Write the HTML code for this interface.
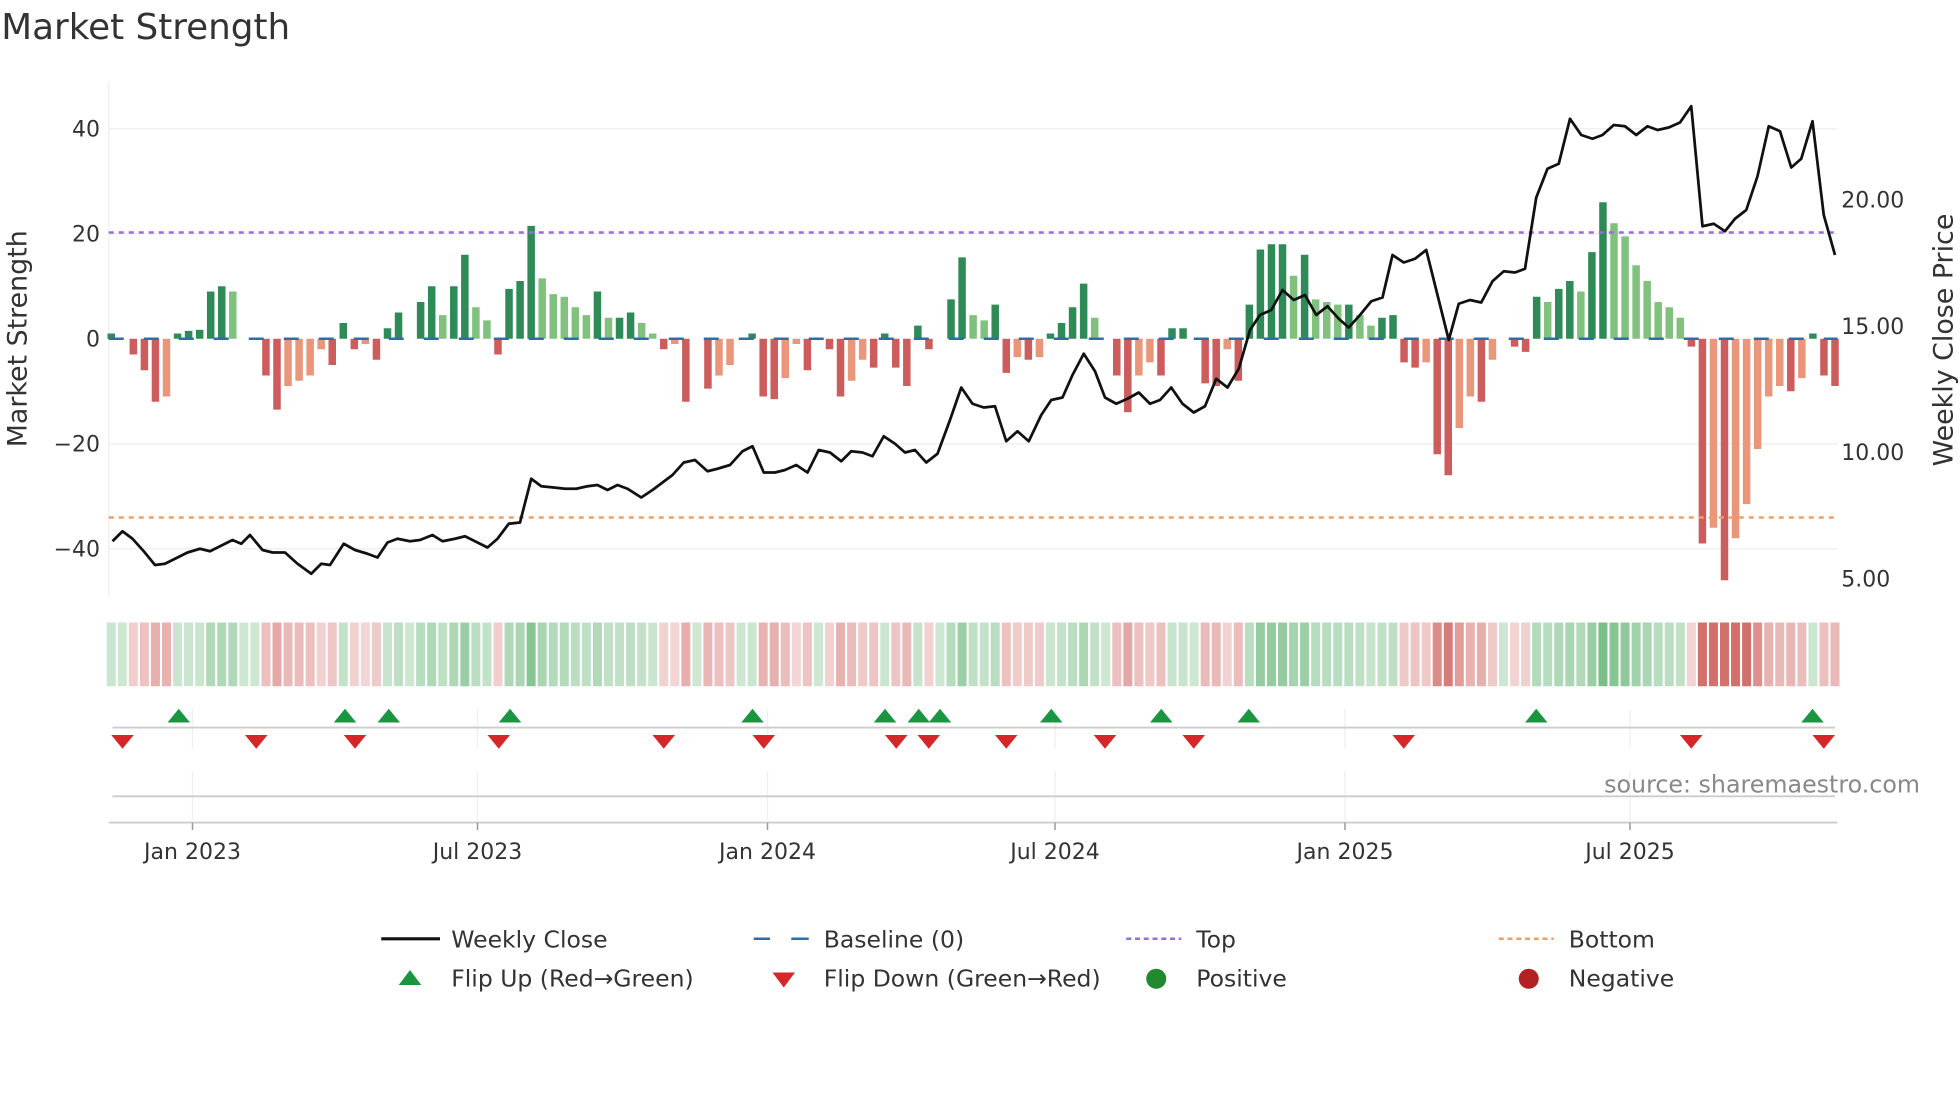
<!DOCTYPE html>
<html><head><meta charset="utf-8"><style>
html,body{margin:0;padding:0;background:#fff;}
svg{display:block;font-family:"DejaVu Sans","Liberation Sans",sans-serif;}
</style></head><body>
<svg id="s" width="1960" height="1102" viewBox="0 0 1568 881.6" xmlns="http://www.w3.org/2000/svg">
<rect width="1568" height="882" fill="#fff"/>
<text x="1" y="31" font-size="28.6" fill="#333">Market Strength</text>
<g stroke="#eef0f4" stroke-width="1.2">
<line x1="87" x2="1470" y1="103" y2="103"/>
<line x1="87" x2="1470" y1="187" y2="187"/>
<line x1="87" x2="1470" y1="355" y2="355"/>
<line x1="87" x2="1470" y1="439" y2="439"/>
<line x1="87" x2="87" y1="65" y2="478"/>
</g>
<g font-size="17.6" fill="#333" text-anchor="end">
<text x="80" y="109">40</text><text x="80" y="193">20</text><text x="80" y="277">0</text>
<text x="80" y="361">−20</text><text x="80" y="445">−40</text>
</g>
<g font-size="17.6" fill="#333">
<text x="1473" y="166">20.00</text><text x="1473" y="267">15.00</text>
<text x="1473" y="368">10.00</text><text x="1473" y="469">5.00</text>
</g>
<text transform="translate(21,271) rotate(-90)" font-size="21.5" fill="#333" text-anchor="middle">Market Strength</text>
<text transform="translate(1562,272) rotate(-90)" font-size="21.5" fill="#333" text-anchor="middle">Weekly Close Price</text>
<g id="bars"></g>
<line x1="87" x2="1470" y1="271" y2="271" stroke="#2b6ea8" stroke-width="2" stroke-dasharray="12 16"/>
<line x1="87" x2="1470" y1="186" y2="186" stroke="#9b6be0" stroke-width="2" stroke-dasharray="4 4"/>
<line x1="87" x2="1470" y1="414" y2="414" stroke="#f0a060" stroke-width="2" stroke-dasharray="4 4"/>
<polyline id="price" fill="none" stroke="#111" stroke-width="2.2" stroke-linejoin="round"/>
<g id="strip"></g>
<g stroke="#eef0f4" stroke-width="1.2" id="vg"></g>
<line x1="90" x2="1468" y1="582" y2="582" stroke="#ccc" stroke-width="1.5"/>
<line x1="90" x2="1468" y1="637" y2="637" stroke="#ccc" stroke-width="1.5"/>
<line x1="87" x2="1470" y1="658" y2="658" stroke="#ccc" stroke-width="1.5"/>
<g id="flips"></g>
<text x="1536" y="634" font-size="19" fill="#888" text-anchor="end">source: sharemaestro.com</text>
<g font-size="17.6" fill="#333" text-anchor="middle" id="ticks"></g>
<g font-size="18.8" fill="#333">
<line x1="305" x2="352" y1="751" y2="751" stroke="#111" stroke-width="2.5"/>
<text x="361" y="758">Weekly Close</text>
<line x1="603" x2="616" y1="751" y2="751" stroke="#2b6ea8" stroke-width="2"/>
<line x1="633" x2="647" y1="751" y2="751" stroke="#2b6ea8" stroke-width="2"/>
<text x="659" y="758">Baseline (0)</text>
<line x1="901" x2="945" y1="751" y2="751" stroke="#9b6be0" stroke-width="2" stroke-dasharray="4 3"/>
<text x="957" y="758">Top</text>
<line x1="1199" x2="1243" y1="751" y2="751" stroke="#f0a060" stroke-width="2" stroke-dasharray="4 3"/>
<text x="1255" y="758">Bottom</text>
<polygon points="319,788 337,788 328,776" fill="#1a9641"/>
<text x="361" y="789">Flip Up (Red→Green)</text>
<polygon points="618,778 636,778 627,790" fill="#d62728"/>
<text x="659" y="789">Flip Down (Green→Red)</text>
<circle cx="925" cy="783" r="8" fill="#1f8a2e"/>
<text x="957" y="789">Positive</text>
<circle cx="1223" cy="783" r="8" fill="#b22222"/>
<text x="1255" y="789">Negative</text>
</g>
</svg>
<script>
var V=[1,0,-3,-6,-12,-11,1,1.5,1.7,9,10,9,0,0,-7,-13.5,-9,-8,-7,-2,-5,3,-2,-1,-4,2,5,0,7,10,4.5,10,16,6,3.5,-3,9.5,11,21.5,11.5,8.5,8,6,4.5,9,4,4,5,3,1,-2,-1,-12,0,-9.5,-7,-5,0,1,-11,-11.5,-7.5,-1,-6,0,-2,-11,-8,-4,-5.5,1,-5.5,-9,2.5,-2,0,7.5,15.5,4.5,3.5,6.5,-6.5,-3.5,-4,-3.5,1,3,6,10.5,4,0,-7,-14,-7,-4.5,-7,2,2,0,-8.5,-9,-2,-8,6.5,17,18,18,12,16,7.5,7,6.5,6.5,4.5,2.5,4,4.5,-4.5,-5.5,-4.5,-22,-26,-17,-11,-12,-4,0,-1.5,-2.5,8,7,9.5,11,9,16.5,26,22,19.5,14,11,7,6,4,-1.5,-39,-36,-46,-38,-31.5,-21,-11,-9,-10,-7.5,1,-7,-9];
var ns="http://www.w3.org/2000/svg";
function el(t,a,p){var e=document.createElementNS(ns,t);for(var k in a)e.setAttribute(k,a[k]);document.getElementById(p).appendChild(e);return e;}
var n=V.length,x0=89,dx=(1468-89)/(n-1);
for(var i=0;i<n;i++){var v=V[i],x=x0+dx*i,prev=i>0?V[i-1]:0;
 var c;
 if(v>=0){c=(v>=prev)?"#2e8b57":"#81c17e";}else{c=(v<=prev)?"#cd5c5c":"#e9967a";}
 var h=Math.abs(v)*4.2;
 if(h>0.3)el("rect",{x:x-3,y:v>0?271-h:271,width:6,height:h,fill:c},"bars");
 var m=Math.min(Math.abs(v)/30,1),col;
 if(v>=0){col="rgba(60,160,80,"+(0.25+0.5*m)+")";}else{col="rgba(200,80,75,"+(0.22+0.6*m)+")";}
 el("rect",{x:x-3.6,y:498,width:7.2,height:51,fill:col},"strip");
}
var P="90,433 98,425 106,431 115,441 124,452 132,451 140,447 150,442 160,439 168,441 178,436 186,432 193,435 200,428 210,440 218,442 228,442 238,451 249,459 257,451 264,452 275,435 284,440 294,443 302,446 310,434 318,431 328,433 336,432 346,428 354,433 364,431 372,429 382,434 390,438 398,431 407,419 416,418 425,383 433,389 443,390 452,391 461,391 470,389 478,388 486,392 494,388 502,391 513,398 522,392 530,386 538,380 547,370 556,368 566,377 574,375 584,372 594,361 602,357 611,378 620,378 628,376 637,372 646,378 655,360 664,362 673,369 681,361 690,362 698,365 707,349 716,355 724,362 732,360 741,370 750,363 760,336 769,310 778,323 787,326 796,325 805,353 814,345 823,353 833,332 841,320 850,318 858,300 867,283 876,297 884,318 893,323 902,319 911,314 920,323 928,320 937,310 946,323 955,330 964,325 973,303 982,310 991,295 1000,264 1008,252 1017,248 1026,232 1035,240 1044,236 1053,252 1062,245 1071,255 1079,262 1088,252 1097,241 1106,238 1114,204 1123,210 1132,207 1141,200 1150,236 1159,272 1167,243 1176,240 1185,242 1194,225 1203,217 1212,218 1220,215 1229,158 1238,135 1247,131 1256,95 1265,108 1274,111 1282,108 1291,100 1300,101 1309,108 1318,101 1326,104 1335,102 1344,98 1353,85 1362,181 1371,179 1380,185 1388,175 1397,168 1406,141 1415,101 1424,105 1433,134 1441,127 1450,97 1459,172 1468,204";
document.getElementById("price").setAttribute("points",P);
var T=[[154,"Jan 2023"],[382,"Jul 2023"],[614,"Jan 2024"],[844,"Jul 2024"],[1076,"Jan 2025"],[1304,"Jul 2025"]];
T.forEach(function(t){
 el("line",{x1:t[0],x2:t[0],y1:567,y2:598},"vg");
 el("line",{x1:t[0],x2:t[0],y1:617,y2:656},"vg");
 el("line",{x1:t[0],x2:t[0],y1:658,y2:664,stroke:"#999","stroke-width":1.2},"flips");
 var tx=el("text",{x:t[0],y:687},"ticks");tx.textContent=t[1];
});
[143,276,311,408,602,708,735,752,841,929,999,1229,1450].forEach(function(x){
 el("polygon",{points:(x-9)+",578 "+(x+9)+",578 "+x+",567",fill:"#1a9641"},"flips");});
[98,205,284,399,531,611,717,743,805,884,955,1123,1353,1459].forEach(function(x){
 el("polygon",{points:(x-9)+",588 "+(x+9)+",588 "+x+",599",fill:"#d62728"},"flips");});
</script>
</body></html>
